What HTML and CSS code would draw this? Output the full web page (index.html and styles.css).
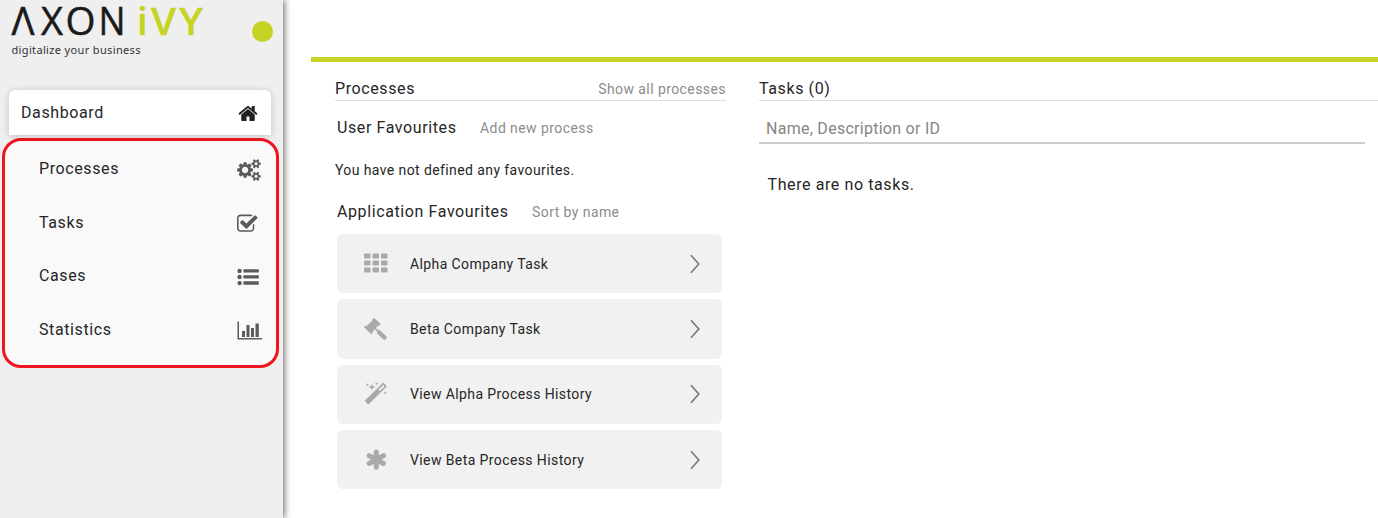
FILE: index.html
```html
<!DOCTYPE html>
<html lang="en">
<head>
<meta charset="utf-8">
<title>Axon Ivy Portal</title>
<link rel="stylesheet" href="styles.css">
</head>
<body>
<div class="app">
  <aside class="sidebar">
    <header class="brand">
      <svg class="logo" width="210" height="62" viewBox="0 0 210 62">
        <g class="logo-axon">
          <text x="11.500" y="35" textLength="23" lengthAdjust="spacingAndGlyphs">Λ</text>
          <text x="41" y="35" textLength="22" lengthAdjust="spacingAndGlyphs">X</text>
          <text x="65.500" y="35" textLength="30" lengthAdjust="spacingAndGlyphs">O</text>
          <text x="98.500" y="35" textLength="27" lengthAdjust="spacingAndGlyphs">N</text>
        </g>
        <g class="logo-ivy">
          <text x="137" y="35">i</text>
          <text x="151" y="35" textLength="25" lengthAdjust="spacingAndGlyphs">V</text>
          <text x="179" y="35" textLength="24" lengthAdjust="spacingAndGlyphs">Y</text>
        </g>
        <text class="tagline" x="11.5" y="54.400" textLength="129">digitalize your business</text>
      </svg>
      <span class="status-dot"></span>
    </header>
    <nav class="menu">
      <a class="menu-main"><span>Dashboard</span>
        <svg width="20" height="21" viewBox="0 0 1664 1792"><path d="M1408 992v480q0 26-19 45t-45 19h-384v-384h-256v384h-384q-26 0-45-19t-19-45v-480q0-1 .5-3t.5-3l575-474 575 474q1 2 1 6zm223-69l-62 74q-8 9-21 11h-3q-13 0-21-7l-692-577-692 577q-12 8-24 7-13-2-21-11l-62-74q-8-10-7-23.5t11-21.5l719-599q32-26 76-26t76 26l244 204v-195q0-14 9-23t23-9h192q14 0 23 9t9 23v408l219 182q10 8 11 21.5t-7 23.5z"/></svg>
      </a>
      <div class="submenu">
        <a class="menu-item"><span>Processes</span><span class="menu-icon">
          <svg width="24" height="22" viewBox="0 0 1920 1792"><path d="M896 896q0-106-75-181t-181-75-181 75-75 181 75 181 181 75 181-75 75-181zm768 512q0-52-38-90t-90-38-90 38-38 90q0 53 37.5 90.5t90.5 37.5 90.5-37.5 37.5-90.5zm0-1024q0-52-38-90t-90-38-90 38-38 90q0 53 37.5 90.5t90.5 37.5 90.5-37.5 37.5-90.5zm-384 421v185q0 10-7 19.5t-16 10.5l-155 24q-11 35-32 76 34 48 90 115 7 11 7 20 0 12-7 19-23 30-82.5 89.5t-78.5 59.5q-11 0-21-7l-115-90q-37 19-77 31-11 108-23 155-7 24-30 24h-186q-11 0-20-7.5t-10-17.5l-23-153q-34-10-75-31l-118 89q-7 7-20 7-11 0-21-8-144-133-144-160 0-9 7-19 10-14 41-53t47-61q-23-44-35-82l-152-24q-10-1-17-9.5t-7-19.5v-185q0-10 7-19.5t16-10.5l155-24q11-35 32-76-34-48-90-115-7-11-7-20 0-12 7-20 22-30 82-89t79-59q11 0 21 7l115 90q34-18 77-32 11-108 23-154 7-24 30-24h186q11 0 20 7.5t10 17.5l23 153q34 10 75 31l118-89q8-7 20-7 11 0 21 8 144 133 144 160 0 8-7 19-12 16-42 54t-45 60q23 48 34 82l152 23q10 2 17 10.5t7 19.5zm640 533v140q0 16-149 31-12 27-30 52 51 113 51 138 0 4-4 7-122 71-124 71-8 0-46-47t-52-68q-20 2-30 2t-30-2q-14 21-52 68t-46 47q-2 0-124-71-4-3-4-7 0-25 51-138-18-25-30-52-149-15-149-31v-140q0-16 149-31 13-29 30-52-51-113-51-138 0-4 4-7 4-2 35-20t59-34 30-16q8 0 46 46.5t52 67.5q20-2 30-2t30 2q51-71 92-112l6-2q4 0 124 70 4 3 4 7 0 25-51 138 17 23 30 52 149 15 149 31zm0-1024v140q0 16-149 31-12 27-30 52 51 113 51 138 0 4-4 7-122 71-124 71-8 0-46-47t-52-68q-20 2-30 2t-30-2q-14 21-52 68t-46 47q-2 0-124-71-4-3-4-7 0-25 51-138-18-25-30-52-149-15-149-31v-140q0-16 149-31 13-29 30-52-51-113-51-138 0-4 4-7 4-2 35-20t59-34 30-16q8 0 46 46.5t52 67.5q20-2 30-2t30 2q51-71 92-112l6-2q4 0 124 70 4 3 4 7 0 25-51 138 17 23 30 52 149 15 149 31z"/></svg>
        </span></a>
        <a class="menu-item"><span>Tasks</span><span class="menu-icon">
          <svg width="22" height="22" viewBox="64 0 1792 1792"><path d="M1472 930v318q0 119-84.5 203.5t-203.5 84.5h-832q-119 0-203.5-84.5t-84.5-203.5v-832q0-119 84.5-203.5t203.5-84.5h832q63 0 117 25 15 7 18 23 3 17-9 29l-49 49q-10 10-23 10-3 0-9-2-23-6-45-6h-832q-66 0-113 47t-47 113v832q0 66 47 113t113 47h832q66 0 113-47t47-113v-254q0-13 9-22l64-64q10-10 23-10 6 0 12 3 20 8 20 29zm231-489l-814 814q-24 24-57 24t-57-24l-430-430q-24-24-24-57t24-57l110-110q24-24 57-24t57 24l263 263 647-647q24-24 57-24t57 24l110 110q24 24 24 57t-24 57z"/></svg>
        </span></a>
        <a class="menu-item"><span>Cases</span><span class="menu-icon">
          <svg width="22" height="18" viewBox="0 0 22 18"><circle cx="2.6" cy="2.9" r="2.2"/><circle cx="2.6" cy="9" r="2.2"/><circle cx="2.6" cy="15.1" r="2.2"/><rect x="6.4" y="1.2" width="15.4" height="3.4" rx=".5"/><rect x="6.4" y="7.2" width="15.4" height="3.4" rx=".5"/><rect x="6.4" y="13.3" width="15.4" height="3.4" rx=".5"/></svg>
        </span></a>
        <a class="menu-item"><span>Statistics</span><span class="menu-icon">
          <svg class="stats-icon" width="25" height="19" viewBox="0 0 25 19"><path d="M0.5 0.5H2V17H25V18.5H0.5ZM5 10H8V16H5ZM9.5 4H12.5V16H9.5ZM14 7H17V16H14ZM18.5 2.5H21.8V16H18.5Z"/></svg>
        </span></a>
      </div>
    </nav>
  </aside>
  <main class="content">
    <section class="processes">
      <div class="section-head"><h2>Processes</h2><a class="link">Show all processes</a></div>
      <div class="group-head user-head"><h3>User Favourites</h3><a class="link">Add new process</a></div>
      <p class="empty-favourites">You have not defined any favourites.</p>
      <div class="group-head app-head"><h3>Application Favourites</h3><a class="link">Sort by name</a></div>
      <ul class="cards">
        <li class="card"><svg class="card-icon" width="26" height="24" viewBox="0 0 26 24"><path d="M2 1.500h4.500q1 0 1 1v3q0 1-1 1h-4.500q-1 0-1-1v-3q0-1 1-1zm8.500 0h4.500q1 0 1 1v3q0 1-1 1h-4.500q-1 0-1-1v-3q0-1 1-1zm8.500 0h4.500q1 0 1 1v3q0 1-1 1h-4.500q-1 0-1-1v-3q0-1 1-1zM2 8.500h4.500q1 0 1 1v3q0 1-1 1h-4.500q-1 0-1-1v-3q0-1 1-1zm8.500 0h4.500q1 0 1 1v3q0 1-1 1h-4.500q-1 0-1-1v-3q0-1 1-1zm8.500 0h4.500q1 0 1 1v3q0 1-1 1h-4.500q-1 0-1-1v-3q0-1 1-1zM2 15.500h4.500q1 0 1 1v3q0 1-1 1h-4.500q-1 0-1-1v-3q0-1 1-1zm8.500 0h4.500q1 0 1 1v3q0 1-1 1h-4.500q-1 0-1-1v-3q0-1 1-1zm8.500 0h4.500q1 0 1 1v3q0 1-1 1h-4.500q-1 0-1-1v-3q0-1 1-1z"/></svg><span class="card-name">Alpha Company Task</span><svg class="chevron" width="12" height="20" viewBox="0 0 12 20"><path d="M2 1.200 9.800 10 2 18.800"/></svg></li>
        <li class="card"><svg class="card-icon" width="26" height="24" viewBox="0 0 26 24"><path d="M11 .8 17.800 7 16.300 8.600 15.600 8.200 12.900 11 15.100 13.200Q16.100 12.400 17.200 13.400L23.500 19.400Q24.500 20.700 23.200 22 21.800 23.700 20.200 22.500L14.200 16.500Q13.300 15.400 14 14.400L11.800 12.200 9.500 14.900 9.900 15.500 8.300 17.200 1 10.300 2.700 8.600 3.600 9 9.900 2.900 9.400 2.300Z"/></svg><span class="card-name">Beta Company Task</span><svg class="chevron" width="12" height="20" viewBox="0 0 12 20"><path d="M2 1.200 9.800 10 2 18.800"/></svg></li>
        <li class="card"><svg class="card-icon" width="26" height="24" viewBox="0 0 26 24"><path fill-rule="evenodd" d="M19.500 1.200Q20.300.4 21.100 1.200L23.300 3.400Q24 4.200 23.300 5L6.200 21.800Q5.300 22.700 4.500 21.800L2.500 19.800Q1.700 19 2.500 18.100ZM20.400 2.900 15.500 7.700 16.800 9 21.700 4.200ZM9 1.500 9.900 4 12.500 5 9.900 6 9 8.500 8.100 6 5.500 5 8.100 4ZM4.500 1 5 2.200 6.300 2.700 5 3.200 4.500 4.500 4 3.200 2.700 2.700 4 2.200ZM13.500 0 14 1.300 15.300 1.800 14 2.300 13.500 3.600 13 2.300 11.700 1.800 13 1.300ZM22 9 22.500 10.300 23.800 10.800 22.500 11.300 22 12.600 21.500 11.300 20.200 10.800 21.500 10.300Z"/></svg><span class="card-name">View Alpha Process History</span><svg class="chevron" width="12" height="20" viewBox="0 0 12 20"><path d="M2 1.200 9.800 10 2 18.800"/></svg></li>
        <li class="card"><svg class="card-icon asterisk" width="26" height="24" viewBox="0 0 26 24"><path d="M13.300 4V19.200M6.200 7.700 20.400 15.500M20.400 7.700 6.200 15.500"/></svg><span class="card-name">View Beta Process History</span><svg class="chevron" width="12" height="20" viewBox="0 0 12 20"><path d="M2 1.200 9.800 10 2 18.800"/></svg></li>
      </ul>
    </section>
    <section class="tasks">
      <div class="section-head"><h2>Tasks (0)</h2></div>
      <input class="search" type="text" placeholder="Name, Description or ID">
      <p class="empty-tasks">There are no tasks.</p>
    </section>
  </main>
</div>
</body>
</html>
```
FILE: styles.css
```css
* { box-sizing: border-box; }
body {
  margin: 0;
  font-family: Roboto, "Liberation Sans", sans-serif;
  font-size: 16px;
  letter-spacing: 0.6px;
  color: #262626;
  background: #fff;
}
.app { display: flex; height: 518px; overflow: hidden; }

.sidebar {
  width: 283px;
  flex: none;
  background: #efefef;
  box-shadow: 1px 0 7px rgba(0, 0, 0, .65);
}
.brand { display: flex; justify-content: space-between; height: 90px; padding-right: 10px; }
.logo { letter-spacing: 0; overflow: visible; }
.logo-axon { font: 400 38.5px "Open Sans", sans-serif; fill: #1a1a1a; stroke: #1a1a1a; stroke-width: .5; }
.logo-ivy { font: 600 38.5px "Open Sans", sans-serif; fill: #c6d324; stroke: #c6d324; stroke-width: .3; }
.tagline { font: 400 11px "Noto Sans", sans-serif; fill: #333; }
.status-dot { width: 21px; height: 21px; margin-top: 21px; border-radius: 50%; background: #c6d324; }

.menu-main {
  display: flex;
  align-items: center;
  justify-content: space-between;
  height: 45px;
  margin: 0 12px 3px 9px;
  padding: 0 13px 1px 12px;
  border-radius: 6px 6px 0 0;
  background: #fff;
  box-shadow: 0 1px 7px rgba(0, 0, 0, .2);
  position: relative;
}
.menu-main svg { fill: #212121; margin-top: 2px; }
.submenu {
  width: 277px;
  height: 230px;
  margin-left: 2px;
  padding: 1px 13px 0 34px;
  border: 3px solid #f0141e;
  border-radius: 19px;
  background: #f9f9f9;
}
.menu-item { display: flex; align-items: center; justify-content: space-between; height: 53.6px; }
.menu-icon { display: flex; width: 26px; padding-top: 3px; }
.menu-icon svg { fill: #5a5a5a; }
.menu-icon .stats-icon { margin-bottom: 2px; }

.content {
  flex: 1;
  display: flex;
  align-items: flex-start;
  gap: 33px;
  margin: 57px 0 0 28px;
  padding: 16px 0 0 24px;
  border-top: 5px solid #c6d324;
}
.processes { width: 391px; flex: none; }
.tasks { flex: 1; }
h2, h3, p { margin: 0; font-weight: 400; font-size: 16px; line-height: 20px; }
.section-head {
  display: flex;
  justify-content: space-between;
  align-items: center;
  height: 22.5px;
  border-bottom: 1px solid #dedede;
}
.link { font-size: 14px; color: #8c8c8c; letter-spacing: .42px; }
.group-head { display: flex; align-items: center; gap: 23.5px; padding-left: 2px; height: 20px; }
.user-head { margin-top: 17.5px; }
.empty-favourites { font-size: 14px; letter-spacing: .4px; margin-top: 22px; }
.app-head { margin-top: 22px; }
.cards { list-style: none; margin: 12px 4px 0 2px; padding: 0; display: grid; gap: 6px; }
.card {
  display: flex;
  align-items: center;
  height: 59.3px;
  padding: 0 21px 0 26px;
  border-radius: 6px;
  background: #f1f1f1;
  font-size: 14px;
  letter-spacing: .4px;
}
.card-icon { fill: #a9a9a9; }
.asterisk { fill: none; stroke: #a9a9a9; stroke-width: 5; stroke-linecap: round; }
.card-name { flex: 1; margin-left: 21px; }
.chevron { fill: none; stroke: #777; stroke-width: 1.6; }
.search {
  display: block;
  width: 606px;
  height: 31px;
  margin-top: 12.5px;
  padding: 2px 7px 0;
  border: 0;
  border-bottom: 2px solid #cdcdcd;
  font: 400 16px Roboto, "Liberation Sans", sans-serif;
  letter-spacing: .27px;
  background: none;
}
.search::placeholder { color: #858585; }
.empty-tasks { margin: 30.5px 0 0 8.5px; }
```
